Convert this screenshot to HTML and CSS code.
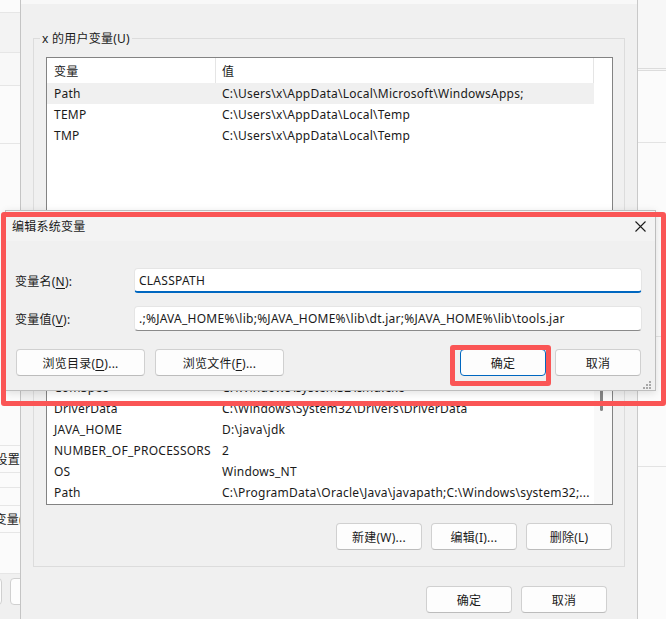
FILE: index.html
```html
<!DOCTYPE html>
<html lang="zh-CN">
<head>
    <meta charset="UTF-8">
    <title>编辑系统变量</title>
    <link rel="stylesheet" href="styles.css">
</head>
<body>

    <div class="desk">
        <div class="side">
            <div class="side-row" style="height:13px"></div>
            <div class="side-row shade" style="height:40px"></div>
            <div class="side-row light" style="height:33px"></div>
            <div class="side-row" style="height:58px"></div>
            <div class="side-row" style="height:302px"></div>
            <div class="side-row end" style="height:27px"><span>高级系统设置</span></div>
            <div class="side-row" style="height:15px"></div>
            <div class="side-row" style="height:18px"></div>
            <div class="side-row cut" style="height:27px"><span>环境变量(N)...</span></div>
            <div class="side-row" style="height:41px"></div>
            <div class="side-foot">
                <div class="side-btn first"></div>
                <div class="side-btn"></div>
            </div>
        </div>

        <div class="env">
            <div class="env-top"></div>

            <div class="group user-group">
                <div class="legend">x 的用户变量(U)</div>
                <div class="list">
                    <div class="list-body user-body">
                        <div class="list-head">
                            <div class="cell-name">变量</div>
                            <div class="cell-value">值</div>
                        </div>
                        <div class="row selected">
                            <div class="cell-name">Path</div>
                            <div class="cell-value">C:\Users\x\AppData\Local\Microsoft\WindowsApps;</div>
                        </div>
                        <div class="row">
                            <div class="cell-name">TEMP</div>
                            <div class="cell-value">C:\Users\x\AppData\Local\Temp</div>
                        </div>
                        <div class="row">
                            <div class="cell-name">TMP</div>
                            <div class="cell-value">C:\Users\x\AppData\Local\Temp</div>
                        </div>
                    </div>
                    <div class="scroll"></div>
                </div>
                <div class="btn-row">
                    <button class="btn">新建(N)...</button>
                    <button class="btn">编辑(E)...</button>
                    <button class="btn">删除(D)</button>
                </div>
            </div>

            <div class="group sys-group">
                <div class="legend">系统变量(S)</div>
                <div class="list">
                    <div class="list-body sys-body">
                        <div class="list-head">
                            <div class="cell-name">变量</div>
                            <div class="cell-value">值</div>
                        </div>
                        <div class="row">
                            <div class="cell-name">CLASSPATH</div>
                            <div class="cell-value">.;%JAVA_HOME%\lib;%JAVA_HOME%\lib\dt.jar;%JAVA_HOME%\lib\tools.jar</div>
                        </div>
                        <div class="row">
                            <div class="cell-name">ComSpec</div>
                            <div class="cell-value">C:\Windows\system32\cmd.exe</div>
                        </div>
                        <div class="row">
                            <div class="cell-name">DriverData</div>
                            <div class="cell-value">C:\Windows\System32\Drivers\DriverData</div>
                        </div>
                        <div class="row">
                            <div class="cell-name">JAVA_HOME</div>
                            <div class="cell-value">D:\java\jdk</div>
                        </div>
                        <div class="row">
                            <div class="cell-name">NUMBER_OF_PROCESSORS</div>
                            <div class="cell-value">2</div>
                        </div>
                        <div class="row">
                            <div class="cell-name">OS</div>
                            <div class="cell-value">Windows_NT</div>
                        </div>
                        <div class="row">
                            <div class="cell-name">Path</div>
                            <div class="cell-value">C:\ProgramData\Oracle\Java\javapath;C:\Windows\system32;...</div>
                        </div>
                    </div>
                    <div class="scroll track">
                        <div class="thumb"></div>
                    </div>
                </div>
                <div class="btn-row">
                    <button class="btn">新建(W)...</button>
                    <button class="btn">编辑(I)...</button>
                    <button class="btn">删除(L)</button>
                </div>
            </div>

            <div class="btn-row footer">
                <button class="btn">确定</button>
                <button class="btn">取消</button>
            </div>
        </div>

        <div class="right">
            <div class="right-row top" style="height:71px"></div>
            <div class="right-row" style="height:72px"></div>
            <div class="right-row" style="height:194px"></div>
            <div class="right-row" style="height:130px"></div>
        </div>
    </div>

    <div class="dialog">
        <div class="title-bar">
            <span>编辑系统变量</span>
            <svg class="close" width="11" height="11" viewBox="0 0 11 11">
                <path d="M0.5 0.5 L10.5 10.5 M10.5 0.5 L0.5 10.5" stroke="#1b1b1b" stroke-width="1.1" fill="none"/>
            </svg>
        </div>
        <form class="dialog-body">
            <div class="field">
                <label for="var-name">变量名(<u>N</u>):</label>
                <input type="text" id="var-name" class="input focus" value="CLASSPATH">
            </div>
            <div class="field">
                <label for="var-value">变量值(<u>V</u>):</label>
                <input type="text" id="var-value" class="input" value=".;%JAVA_HOME%\lib;%JAVA_HOME%\lib\dt.jar;%JAVA_HOME%\lib\tools.jar">
            </div>
            <div class="dialog-btns">
                <button type="button" class="btn wide">浏览目录(<u>D</u>)...</button>
                <button type="button" class="btn wide">浏览文件(<u>F</u>)...</button>
                <span class="spacer"></span>
                <button type="submit" class="btn primary">确定</button>
                <button type="button" class="btn">取消</button>
            </div>
        </form>
        <svg class="grip" width="9" height="8" viewBox="0 0 9 8">
            <rect x="7" y="0" width="2" height="2" fill="#a8a8a8"/>
            <rect x="4" y="3" width="2" height="2" fill="#a8a8a8"/>
            <rect x="7" y="3" width="2" height="2" fill="#a8a8a8"/>
            <rect x="1" y="6" width="2" height="2" fill="#a8a8a8"/>
            <rect x="4" y="6" width="2" height="2" fill="#a8a8a8"/>
            <rect x="7" y="6" width="2" height="2" fill="#a8a8a8"/>
        </svg>
    </div>

    <div class="mark mark-dialog"></div>
    <div class="mark mark-ok"></div>

</body>
</html>
```

FILE: styles.css
```css
* {
    box-sizing: border-box;
}

body {
    margin: 0;
    width: 666px;
    height: 619px;
    overflow: hidden;
    position: relative;
    font-family: "Noto Sans", "Noto Sans CJK SC", sans-serif;
    font-size: 12px;
    letter-spacing: 0.25px;
    color: #1a1a1a;
    background-color: #f0f0f0;
}

.desk {
    display: flex;
    height: 619px;
}

/* window peeking in on the left */
.side {
    width: 21px;
    flex: none;
    display: flex;
    flex-direction: column;
    background-color: #fbfbfb;
    border-right: 1px solid #c4c4c4;
    overflow: hidden;
}

.side-row {
    flex: none;
    display: flex;
    align-items: center;
    white-space: nowrap;
    overflow: hidden;
    border-bottom: 1px solid #e6e6e6;
}

.side-row.shade {
    background-color: #f3f3f3;
}

.side-row.light {
    background-color: #f8f8f8;
}

.side-row.end {
    justify-content: flex-end;
}

.side-row.cut span {
    margin-left: -30px;
}

.side-foot {
    flex: 1;
    display: flex;
    gap: 8px;
    padding-top: 4px;
    background-color: #f0f0f0;
}

.side-btn {
    width: 30px;
    height: 27px;
    flex: none;
    background-color: #fdfdfd;
    border: 1px solid #d0d0d0;
    border-radius: 4px;
}

.side-btn.first {
    margin-left: -28px;
}

/* environment variables window */
.env {
    width: 617px;
    flex: none;
    display: flex;
    flex-direction: column;
    padding: 0 12px;
    border-right: 1px solid #c9c9c9;
}

.env-top {
    height: 4px;
    margin: 0 -12px 34px;
    background-color: #f8f8f8;
}

.group {
    border: 1px solid #dcdcdc;
    padding: 0 11px 16px 12px;
}

.sys-group {
    margin-top: 15px;
}

.legend {
    display: table;
    margin: -8px 0 0 -6px;
    padding: 0 2px;
    line-height: 16px;
    background-color: #f0f0f0;
}

.list {
    display: flex;
    margin-top: 10px;
    background-color: #fff;
    border: 1px solid #838383;
}

.list-body {
    width: 547px;
    flex: none;
}

.user-body {
    height: 175px;
}

.sys-body {
    padding-bottom: 1px;
}

.list-head {
    display: flex;
    height: 25px;
    align-items: stretch;
    border-right: 1px solid #e5e5e5;
}

.list-head .cell-name,
.list-head .cell-value {
    display: flex;
    align-items: center;
}

.list-head .cell-value {
    border-left: 1px solid #e5e5e5;
    padding-left: 6px;
}

.row {
    display: flex;
    height: 21px;
    align-items: center;
    white-space: nowrap;
}

.row.selected {
    background-color: #f0f0f0;
}

.cell-name {
    width: 168px;
    flex: none;
    padding-left: 7px;
    overflow: hidden;
}

.cell-value {
    flex: 1;
    padding-left: 7px;
    overflow: hidden;
}

.scroll {
    flex: 1;
}

.scroll.track {
    background-color: #f9f9f9;
    padding: 8px 0 0 6px;
}

.thumb {
    width: 3px;
    height: 72px;
    background-color: #858585;
    border-radius: 2px;
}

.btn-row {
    display: flex;
    justify-content: flex-end;
    gap: 9px;
    margin-top: 18px;
    padding-right: 1px;
}

.footer {
    margin-top: 19px;
    padding-right: 18px;
}

.btn {
    width: 86px;
    height: 27px;
    flex: none;
    padding: 0;
    font-family: inherit;
    font-size: 12px;
    letter-spacing: 0.25px;
    color: #1a1a1a;
    background-color: #fdfdfd;
    border: 1px solid #d0d0d0;
    border-bottom-color: #bcbcbc;
    border-radius: 4px;
}

.btn.wide {
    width: 129px;
}

.btn.primary {
    border: 1px solid #0067c0;
}

.btn u {
    text-underline-offset: 2px;
}

/* right neighbour window */
.right {
    flex: 1;
    display: flex;
    flex-direction: column;
    background-color: #fbfbfb;
}

.right-row {
    flex: none;
    border-bottom: 1px solid #e3e3e3;
}

.right-row.top {
    background-color: #f7f7f7;
    border-bottom: 3px double #dcdcdc;
}

/* edit dialog on top */
.dialog {
    position: absolute;
    left: 5px;
    top: 210px;
    width: 651px;
    height: 181px;
    background-color: #f0f0f0;
    border: 1px solid #bdbdbd;
    box-shadow: 0 2px 8px rgba(0, 0, 0, 0.12);
}

.title-bar {
    height: 30px;
    display: flex;
    align-items: center;
    justify-content: space-between;
    padding: 0 9px 0 6px;
    background-color: #f3f3f3;
}

.close {
    display: block;
}

.dialog-body {
    margin: 0;
    padding: 27px 13px 14px 9px;
}

.field {
    display: flex;
    align-items: center;
    height: 25px;
    margin-bottom: 13px;
}

.field label {
    width: 119px;
    flex: none;
}

.field label u {
    text-underline-offset: 2px;
}

.input {
    flex: 1;
    height: 25px;
    padding: 0 4px;
    font-family: inherit;
    font-size: 12px;
    letter-spacing: 0.25px;
    color: #1a1a1a;
    background-color: #fff;
    border: 1px solid #e5e5e5;
    border-bottom-color: #8a8a8a;
    border-radius: 4px;
    outline: none;
}

.input.focus {
    border-bottom: 2px solid #0067c0;
}

.dialog-btns {
    display: flex;
    gap: 10px;
    margin-top: 18px;
    padding: 0 1px;
}

.dialog-btns .btn.primary + .btn {
    margin-left: -1px;
}

.spacer {
    flex: 1;
}

.grip {
    position: absolute;
    right: 4px;
    bottom: 1px;
}

/* red highlight marks */
.mark {
    position: absolute;
    border: 5px solid #fa5555;
    border-radius: 3px;
}

.mark-dialog {
    left: 1px;
    top: 212px;
    width: 665px;
    height: 194px;
}

.mark-ok {
    left: 450px;
    top: 345px;
    width: 101px;
    height: 41px;
}
```
